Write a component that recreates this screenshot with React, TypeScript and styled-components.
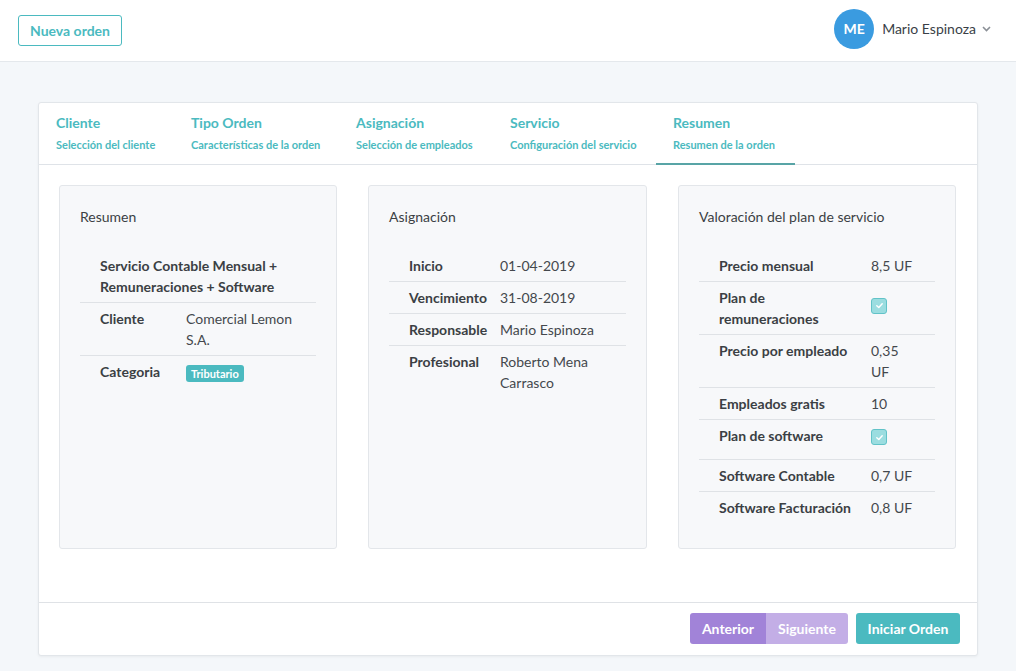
import React from "react";
import styled, { createGlobalStyle } from "styled-components";

const Global = createGlobalStyle`
  html, body { margin: 0; padding: 0; }
  body {
    font-family: Lato, "Open Sans", "Liberation Sans", sans-serif;
    background: #f4f7fa;
    color: #3b3f44;
  }
  * { box-sizing: border-box; }
`;

const TEAL = "#4bbac0";

const Header = styled.header`
  height: 62px;
  background: #fff;
  border-bottom: 1px solid #e4e8ec;
  display: flex;
  align-items: center;
  justify-content: space-between;
  padding: 0 25px 0 18px;
`;

const OutlineButton = styled.button`
  height: 31px;
  width: 104px;
  border: 1px solid ${TEAL};
  border-radius: 3px;
  background: #fff;
  color: ${TEAL};
  font-family: inherit;
  font-weight: 700;
  font-size: 14px;
  cursor: pointer;
`;

const User = styled.div`
  display: flex;
  align-items: center;
  gap: 8px;
  margin-top: -4px;
`;

const Avatar = styled.div`
  width: 40px;
  height: 40px;
  border-radius: 50%;
  background: #3a9be0;
  color: #fff;
  font-weight: 700;
  font-size: 14px;
  display: flex;
  align-items: center;
  justify-content: center;
`;

const UserName = styled.span`
  font-size: 14px;
  color: #3a3f47;
`;

const Main = styled.main`
  padding: 40px 38px 16px;
`;

const Card = styled.section`
  background: #fff;
  border: 1px solid #e2e6ea;
  border-radius: 3px;
  box-shadow: 0 1px 3px rgba(0, 0, 0, 0.05);
`;

const Tabs = styled.nav`
  display: flex;
  border-bottom: 1px solid #dfe3e8;
  height: 62px;
`;

const Tab = styled.div<{ $active?: boolean; $w: number }>`
  padding: 10px 17px 0;
  width: ${(p) => p.$w}px;
  border-bottom: 2px solid ${(p) => (p.$active ? "#58a4a6" : "transparent")};
  margin-bottom: -1px;
`;

const TabTitle = styled.div`
  color: ${TEAL};
  font-size: 14px;
  font-weight: 700;
  line-height: 20px;
  margin-bottom: 4px;
`;

const TabSub = styled.div`
  color: ${TEAL};
  font-size: 11px;
  font-weight: 700;
  line-height: 16px;
  white-space: nowrap;
`;

const Body = styled.div`
  display: grid;
  grid-template-columns: 278px 279px 278px;
  column-gap: 31px;
  padding: 20px 20px 53px;
`;

const Panel = styled.div`
  background: #f7f8fa;
  border: 1px solid #e3e6ea;
  border-radius: 3px;
  height: 364px;
  padding: 20px;
`;

const PanelTitle = styled.h3`
  margin: 0 0 23px;
  font-size: 14px;
  font-weight: 400;
  line-height: 21px;
  color: #3b3f44;
`;

const Row = styled.div<{ $cols: string }>`
  display: grid;
  grid-template-columns: ${(p) => p.$cols};
  border-bottom: 1px solid #dfe2e6;
  padding: 5px 0;
  font-size: 14px;
  line-height: 21px;
  &:last-child { border-bottom: none; }
`;

const FullCell = styled.div`
  grid-column: 1 / -1;
  padding: 0 10px 0 20px;
  font-weight: 700;
  color: #3b3f44;
`;

const Label = styled.div`
  padding-left: 20px;
  padding-right: 6px;
  font-weight: 700;
  color: #3b3f44;
`;

const Value = styled.div`
  color: #44484d;
  padding-right: 4px;
`;

const CheckCell = styled.div`
  align-self: center;
  height: 29px;
  padding-top: 4px;
`;

const Badge = styled.span`
  display: inline-block;
  background: ${TEAL};
  color: #fff;
  font-size: 11px;
  font-weight: 700;
  line-height: 17px;
  padding: 0 5px;
  border-radius: 3px;
  vertical-align: middle;
`;

const Check = styled.span`
  display: flex;
  align-items: center;
  justify-content: center;
  width: 16px;
  height: 16px;
  border-radius: 3px;
  background: #9bdde0;
  border: 1px solid #62c3c8;
`;

const Footer = styled.div`
  border-top: 1px solid #dfe2e6;
  padding: 10px 17px 11px;
  display: flex;
  justify-content: flex-end;
  gap: 8px;
`;

const Group = styled.div`
  display: flex;
  border-radius: 3px;
  overflow: hidden;
`;

const Btn = styled.button<{ $bg: string; $w: number }>`
  height: 31px;
  width: ${(p) => p.$w}px;
  border: none;
  background: ${(p) => p.$bg};
  color: #fff;
  font-family: inherit;
  font-size: 14px;
  font-weight: 700;
  cursor: pointer;
`;

const SolidBtn = styled(Btn)`
  border-radius: 3px;
`;

const CheckIcon = () => (
  <svg width="9" height="9" viewBox="0 0 10 10">
    <path d="M2 5.2 L4.2 7.3 L8 3" stroke="#fff" strokeWidth="1.6" fill="none" strokeLinecap="round" strokeLinejoin="round" />
  </svg>
);

const Chevron = () => (
  <svg width="9" height="6" viewBox="0 0 9 6" style={{ marginLeft: -2, marginTop: 1 }}>
    <path d="M1 1 L4.5 4.5 L8 1" stroke="#8a8f96" strokeWidth="1.6" fill="none" />
  </svg>
);

const tabs: [string, string, number][] = [
  ["Cliente", "Selección del cliente", 135],
  ["Tipo Orden", "Características de la orden", 165],
  ["Asignación", "Selección de empleados", 154],
  ["Servicio", "Configuración del servicio", 163],
  ["Resumen", "Resumen de la orden", 139],
];

const C1 = "106px 1fr";
const C2 = "111px 1fr";
const C3 = "172px 48px";

export default function App() {
  return (
    <>
      <Global />
      <Header>
        <OutlineButton>Nueva orden</OutlineButton>
        <User>
          <Avatar>ME</Avatar>
          <UserName>Mario Espinoza</UserName>
          <Chevron />
        </User>
      </Header>
      <Main>
        <Card>
          <Tabs>
            {tabs.map(([t, s, w], i) => (
              <Tab key={t} $active={i === 4} $w={w}>
                <TabTitle>{t}</TabTitle>
                <TabSub>{s}</TabSub>
              </Tab>
            ))}
          </Tabs>
          <Body>
            <Panel>
              <PanelTitle>Resumen</PanelTitle>
              <Row $cols={C1}>
                <FullCell>Servicio Contable Mensual + Remuneraciones + Software</FullCell>
              </Row>
              <Row $cols={C1}>
                <Label>Cliente</Label>
                <Value>Comercial Lemon S.A.</Value>
              </Row>
              <Row $cols={C1}>
                <Label>Categoria</Label>
                <Value><Badge>Tributario</Badge></Value>
              </Row>
            </Panel>
            <Panel>
              <PanelTitle>Asignación</PanelTitle>
              <Row $cols={C2}>
                <Label>Inicio</Label>
                <Value>01-04-2019</Value>
              </Row>
              <Row $cols={C2}>
                <Label>Vencimiento</Label>
                <Value>31-08-2019</Value>
              </Row>
              <Row $cols={C2}>
                <Label>Responsable</Label>
                <Value>Mario Espinoza</Value>
              </Row>
              <Row $cols={C2}>
                <Label>Profesional</Label>
                <Value>Roberto Mena Carrasco</Value>
              </Row>
            </Panel>
            <Panel>
              <PanelTitle>Valoración del plan de servicio</PanelTitle>
              <Row $cols={C3}>
                <Label>Precio mensual</Label>
                <Value>8,5 UF</Value>
              </Row>
              <Row $cols={C3}>
                <Label>Plan de remuneraciones</Label>
                <CheckCell><Check><CheckIcon /></Check></CheckCell>
              </Row>
              <Row $cols={C3}>
                <Label>Precio por empleado</Label>
                <Value>0,35 UF</Value>
              </Row>
              <Row $cols={C3}>
                <Label>Empleados gratis</Label>
                <Value>10</Value>
              </Row>
              <Row $cols={C3}>
                <Label>Plan de software</Label>
                <CheckCell><Check><CheckIcon /></Check></CheckCell>
              </Row>
              <Row $cols={C3}>
                <Label>Software Contable</Label>
                <Value>0,7 UF</Value>
              </Row>
              <Row $cols={C3}>
                <Label>Software Facturación</Label>
                <Value>0,8 UF</Value>
              </Row>
            </Panel>
          </Body>
          <Footer>
            <Group>
              <Btn $bg="#a183d8" $w={76}>Anterior</Btn>
              <Btn $bg="#c3aee6" $w={82}>Siguiente</Btn>
            </Group>
            <SolidBtn $bg={TEAL} $w={104}>Iniciar Orden</SolidBtn>
          </Footer>
        </Card>
      </Main>
    </>
  );
}
